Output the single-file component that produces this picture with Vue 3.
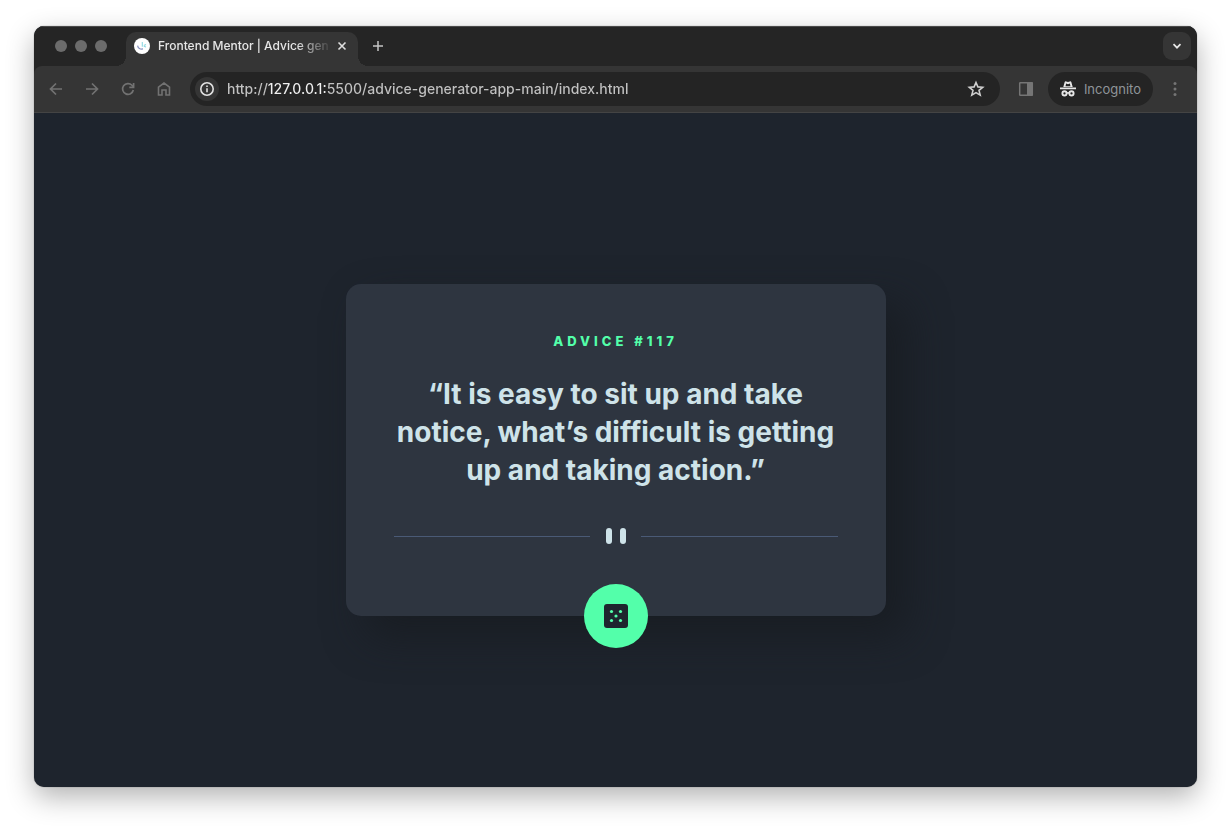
<script setup>
import { ref } from 'vue'

const url = ref('http://127.0.0.1:5500/advice-generator-app-main/index.html')
const advice = {
  id: 117,
  text: 'It is easy to sit up and take notice, what’s difficult is getting up and taking action.',
}
</script>

<template>
  <div class="desktop">
    <div class="window">
      <header class="tabstrip">
        <div class="lights"><i></i><i></i><i></i></div>
        <div class="tab">
          <svg class="favicon" width="16" height="16" viewBox="0 0 16 16" fill="none">
            <circle cx="8" cy="8" r="8" fill="#fff" />
            <path d="M3.600 7.600c.4 2.600 2.500 3.900 5.400 3.300" stroke="#8791c0" stroke-width="1.200" />
            <path d="M8.300 4v4.800M9.800 7.600l2.200-1.200M9.800 8.200l2.200.9" stroke="#8fd8e2" stroke-width="1.100" />
          </svg>
          <span class="tab-title">Frontend Mentor | Advice gen</span>
          <button class="icon-btn close" aria-label="Close tab">
            <svg width="16" height="16" viewBox="0 0 16 16"><path d="M4.500 4.500l7 7M11.500 4.500l-7 7" stroke="#dedede" stroke-width="1.600" /></svg>
          </button>
        </div>
        <button class="icon-btn new-tab" aria-label="New tab">
          <svg width="16" height="16" viewBox="0 0 16 16"><path d="M8 3v10M3 8h10" stroke="#c4c4c4" stroke-width="1.500" /></svg>
        </button>
        <button class="icon-btn tab-search" aria-label="Search tabs">
          <svg width="12" height="12" viewBox="0 0 12 12" fill="none"><path d="M2.500 4.200L6 7.700l3.500-3.500" stroke="#e8e8e8" stroke-width="1.700" /></svg>
        </button>
      </header>

      <nav class="toolbar">
        <button class="icon-btn nav-btn" aria-label="Back">
          <svg width="16" height="16" viewBox="0 0 16 16" fill="none" stroke="#727272" stroke-width="1.700"><path d="M14 8H3M8 2.500L2.500 8L8 13.500" /></svg>
        </button>
        <button class="icon-btn nav-btn" aria-label="Forward">
          <svg width="16" height="16" viewBox="0 0 16 16" fill="none" stroke="#727272" stroke-width="1.700"><path d="M2 8h11M8 2.500L13.500 8L8 13.500" /></svg>
        </button>
        <button class="icon-btn nav-btn" aria-label="Reload">
          <svg width="16" height="16" viewBox="0 0 16 16" fill="none" stroke="#727272" stroke-width="1.700"><path d="M13.300 9a5.400 5.400 0 1 1-1.300-4.700L13.500 6" /><path d="M13.600 2v4.300H9.300" /></svg>
        </button>
        <button class="icon-btn nav-btn" aria-label="Home">
          <svg width="16" height="16" viewBox="0 0 16 16" fill="none" stroke="#727272" stroke-width="1.600"><path d="M2.500 6.200L8 2l5.500 4.200V14H10V9H6v5H2.500z" /></svg>
        </button>

        <div class="omnibox">
          <button class="icon-btn site-info" aria-label="View site information">
            <svg width="16" height="16" viewBox="0 0 16 16" fill="none" stroke="#e3e3e3"><circle cx="8" cy="8" r="6.200" stroke-width="1.600" /><path d="M8 7.200v4M8 4.600v1.500" stroke-width="1.600" /></svg>
          </button>
          <input v-model="url" class="url" type="text" aria-label="Address" spellcheck="false" />
          <button class="icon-btn star" aria-label="Bookmark this page">
            <svg width="18" height="18" viewBox="0 0 18 18" fill="none" stroke="#d0d0d0" stroke-width="1.600"><path d="M9 2.500l1.900 4.400 4.800.4-3.700 3.100 1.200 4.700L9 12.600l-4.200 2.500L6 10.400 2.300 7.300l4.800-.4z" /></svg>
          </button>
        </div>

        <button class="icon-btn panel" aria-label="Side panel">
          <svg width="16" height="16" viewBox="0 0 16 16"><rect x="1.700" y="1.700" width="12.600" height="12.600" rx=".6" fill="none" stroke="#757575" stroke-width="1.500" /><path d="M9 1.500h6v13H9z" fill="#757575" /></svg>
        </button>
        <button class="incognito">
          <svg width="18" height="18" viewBox="0 0 18 18" fill="none">
            <path d="M4.300 7L5.600 2.200Q6 1 7.200 1.400L9 2l1.800-.6q1.200-.4 1.600.8L13.700 7z" fill="#e6e6e6" />
            <path d="M7.200 3.600L6.500 6.200h5l-.7-2.600L9 4.200z" fill="#242424" />
            <path d="M1 8.300h16" stroke="#e6e6e6" stroke-width="1.800" />
            <circle cx="5.500" cy="13.400" r="2.100" stroke="#e6e6e6" stroke-width="1.900" />
            <circle cx="12.500" cy="13.400" r="2.100" stroke="#e6e6e6" stroke-width="1.900" />
            <path d="M7.500 13.300q1.500-1 3 0" stroke="#e6e6e6" stroke-width="1.400" />
          </svg>
          <span>Incognito</span>
        </button>
        <button class="icon-btn menu" aria-label="Menu">
          <svg width="16" height="16" viewBox="0 0 16 16" fill="#757575"><circle cx="8" cy="2.600" r="1.500" /><circle cx="8" cy="8" r="1.500" /><circle cx="8" cy="13.400" r="1.500" /></svg>
        </button>
      </nav>

      <main class="page">
        <article class="card">
          <h1 class="label">Advice #{{ advice.id }}</h1>
          <p class="quote">“{{ advice.text }}”</p>
          <div class="divider">
            <span class="rule"></span>
            <i class="bar"></i>
            <i class="bar"></i>
            <span class="rule"></span>
          </div>
          <button class="dice" aria-label="New advice">
            <svg width="24" height="24" viewBox="0 0 24 24">
              <rect width="24" height="24" rx="3" fill="#1e252e" />
              <g fill="#53ffaa"><circle cx="7.500" cy="7.500" r="1.600" /><circle cx="16.500" cy="7.500" r="1.600" /><circle cx="12" cy="12" r="1.600" /><circle cx="7.500" cy="16.500" r="1.600" /><circle cx="16.500" cy="16.500" r="1.600" /></g>
            </svg>
          </button>
        </article>
      </main>
    </div>
  </div>
</template>

<style>
body {
  margin: 0;
  background: #fff;
}
</style>

<style scoped>
* {
  box-sizing: border-box;
}
.desktop {
  display: flex;
  min-height: 100vh;
  padding: 26px 34px 42px;
  font-family: Inter, "Liberation Sans", sans-serif;
}
.window {
  display: flex;
  flex: 1;
  flex-direction: column;
  min-width: 0;
  border-radius: 10px;
  overflow: hidden;
  background: #1e242d;
  box-shadow: 0 0 1px rgba(0, 0, 0, 0.6), 0 10px 28px rgba(0, 0, 0, 0.3);
}
button {
  border: 0;
  padding: 0;
  font: inherit;
  background: none;
  cursor: pointer;
}
.icon-btn {
  display: grid;
  flex: none;
  place-items: center;
}
.tabstrip {
  z-index: 1;
  display: flex;
  align-items: center;
  height: 40px;
  padding-right: 6px;
  background: #252525;
  box-shadow: inset 0 1px #4a4a4a;
}
.lights {
  display: flex;
  gap: 8px;
  padding: 0 19px 0 21px;
}
.lights i {
  width: 12px;
  height: 12px;
  border-radius: 50%;
  background: #6c6c6c;
}
.tab {
  position: relative;
  display: flex;
  align-items: center;
  align-self: flex-end;
  width: 232px;
  height: 34px;
  padding: 0 8px 6px;
  border-radius: 10px 10px 0 0;
  background: #353535;
}
.tab::before,
.tab::after {
  content: "";
  position: absolute;
  bottom: 0;
  width: 10px;
  height: 10px;
}
.tab::before {
  right: 100%;
  background: radial-gradient(circle at 0 0, transparent 10px, #353535 10px);
}
.tab::after {
  left: 100%;
  background: radial-gradient(circle at 100% 0, transparent 10px, #353535 10px);
}
.favicon {
  flex: none;
}
.tab-title {
  flex: 1;
  min-width: 0;
  margin: 0 5px 0 8px;
  white-space: nowrap;
  font-size: 12px;
  font-weight: 500;
  line-height: 16px;
  color: #e6e6e6;
  mask-image: linear-gradient(to right, #000 138px, transparent 174px);
}
.new-tab {
  width: 28px;
  height: 28px;
  margin-left: 6px;
}
.tab-search {
  width: 28px;
  height: 28px;
  margin-left: auto;
  border-radius: 9px;
  background: #353535;
}
.toolbar {
  display: flex;
  align-items: center;
  height: 47px;
  padding: 0 14px 0 8px;
  border-bottom: 1px solid #444;
  border-radius: 8px 8px 0 0;
  background: #353535;
  box-shadow: 0 -10px 0 10px #252525;
  clip-path: inset(0);
}
.nav-btn {
  width: 28px;
  height: 28px;
  margin-right: 8px;
}
.omnibox {
  display: flex;
  flex: 1;
  align-items: center;
  min-width: 0;
  height: 34px;
  margin-left: 4px;
  padding: 0 15px 0 5px;
  border-radius: 17px;
  background: #242424;
}
.site-info {
  width: 24px;
  height: 24px;
  border-radius: 50%;
  background: #353535;
}
.url {
  flex: 1;
  min-width: 0;
  margin-left: 8px;
  padding: 0;
  border: 0;
  outline: 0;
  font: 500 14px/20px Inter, "Liberation Sans", sans-serif;
  color: transparent;
  background: linear-gradient(to right, #c2c2c2 41px, #f0f0f0 41px, #f0f0f0 100px, #c2c2c2 100px);
  background-clip: text;
}
.panel {
  margin: 0 14px 0 18px;
}
.incognito {
  display: flex;
  align-items: center;
  gap: 7px;
  height: 34px;
  padding: 0 12px 0 11px;
  border-radius: 17px;
  font-size: 13px;
  color: #8f9499;
  background: #242424;
}
.menu {
  margin-left: 14px;
}
.page {
  display: flex;
  flex: 1;
  align-items: center;
  justify-content: center;
  padding: 0 24px;
}
.card {
  position: relative;
  width: 100%;
  max-width: 540px;
  padding: 48px 48px 72px;
  border-radius: 15px;
  text-align: center;
  background: #2e3540;
  box-shadow: 20px 20px 40px rgba(24, 27, 33, 0.8);
}
.label {
  margin: 0 0 24px;
  font-size: 13px;
  font-weight: 800;
  line-height: 19px;
  letter-spacing: 4px;
  text-transform: uppercase;
  color: #53ffaa;
}
.quote {
  margin: 0;
  font-size: 28px;
  font-weight: 700;
  line-height: 38px;
  color: #cee3e9;
}
.divider {
  display: flex;
  align-items: center;
  gap: 8px;
  margin-top: 39px;
}
.rule {
  flex: 1;
  height: 1px;
  background: #4a5a76;
}
.rule:first-child {
  margin-right: 8px;
}
.rule:last-child {
  margin-left: 7px;
}
.bar {
  width: 6px;
  height: 16px;
  border-radius: 3px;
  background: #cee3e9;
}
.dice {
  position: absolute;
  bottom: -32px;
  left: calc(50% - 32px);
  display: grid;
  place-items: center;
  width: 64px;
  height: 64px;
  border-radius: 50%;
  background: #53ffaa;
}
</style>
